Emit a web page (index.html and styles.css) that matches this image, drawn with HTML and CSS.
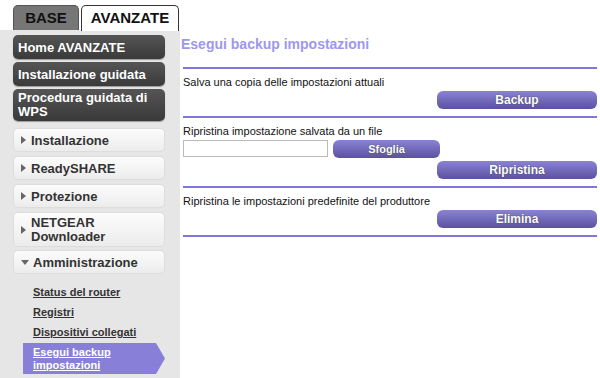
FILE: index.html
```html
<!DOCTYPE html>
<html lang="it">
<head>
    <meta charset="UTF-8">
    <title>Esegui backup impostazioni</title>
    <link rel="stylesheet" href="styles.css">
</head>
<body>
    <div class="tabs">
        <div class="tab">BASE</div>
        <div class="tab active">AVANZATE</div>
    </div>

    <div class="main">
        <div class="sidebar">
            <div class="nav dark">Home AVANZATE</div>
            <div class="nav dark">Installazione guidata</div>
            <div class="nav dark tall">Procedura guidata di<br>WPS</div>

            <div class="nav light first"><span class="arrow"></span><span>Installazione</span></div>
            <div class="nav light"><span class="arrow"></span><span>ReadySHARE</span></div>
            <div class="nav light"><span class="arrow"></span><span>Protezione</span></div>
            <div class="nav light tall2"><span class="arrow"></span><span>NETGEAR<br>Downloader</span></div>
            <div class="nav light"><span class="arrow down"></span><span>Amministrazione</span></div>

            <ul class="sub">
                <li><a href="#">Status del router</a></li>
                <li><a href="#">Registri</a></li>
                <li><a href="#">Dispositivi collegati</a></li>
                <li class="selected"><a href="#">Esegui backup<br>impostazioni</a></li>
            </ul>
        </div>

        <div class="content">
            <h1 class="title">Esegui backup impostazioni</h1>

            <div class="section">
                <p class="label">Salva una copia delle impostazioni attuali</p>
                <div class="row-right"><button class="btn">Backup</button></div>
            </div>

            <div class="section">
                <p class="label">Ripristina impostazione salvata da un file</p>
                <div class="file-row">
                    <input type="text" class="file-input">
                    <button class="btn small">Sfoglia</button>
                </div>
                <div class="row-right"><button class="btn">Ripristina</button></div>
            </div>

            <div class="section">
                <p class="label">Ripristina le impostazioni predefinite del produttore</p>
                <div class="row-right"><button class="btn">Elimina</button></div>
            </div>
        </div>
    </div>
</body>
</html>
```

FILE: styles.css
```css
* {
    margin: 0;
    padding: 0;
    box-sizing: border-box;
}

body {
    width: 600px;
    height: 378px;
    overflow: hidden;
    background-color: #fff;
    font-family: "Liberation Sans", Arial, sans-serif;
}

.tabs {
    display: flex;
    gap: 2px;
    padding: 5px 0 0 13px;
    height: 30px;
}

.tab {
    width: 66px;
    height: 25px;
    background-color: #767676;
    border: 1px solid #555;
    border-bottom: 0;
    border-radius: 5px 5px 0 0;
    font-size: 15px;
    font-weight: bold;
    color: #111;
    text-align: center;
    line-height: 24px;
}

.tab.active {
    width: 98px;
    height: 26px;
    background-color: #fff;
    border-color: #333;
    position: relative;
    z-index: 1;
}

.main {
    display: flex;
    height: 348px;
}

.sidebar {
    width: 180px;
    background-color: #e6e6e6;
    padding: 5px 0 0 13px;
}

.nav {
    width: 152px;
    height: 24px;
    border-radius: 5px;
    margin-bottom: 3px;
    font-size: 13px;
    font-weight: bold;
    display: flex;
    align-items: center;
}

.nav.dark {
    background: linear-gradient(#555, #3a3a3a);
    color: #fff;
    padding-left: 5px;
    box-shadow: 0 1px 1px #999;
}

.nav.dark.tall {
    height: 32px;
    line-height: 14px;
}

.nav.light {
    background: linear-gradient(#fcfcfc, #ececec);
    border: 1px solid #ddd;
    color: #333;
    padding-left: 7px;
    margin-bottom: 4px;
}

.nav.light.first {
    margin-top: 7px;
}

.nav.light.tall2 {
    height: 35px;
    line-height: 14px;
    margin-bottom: 3px;
}

.arrow {
    width: 0;
    height: 0;
    border-top: 4px solid transparent;
    border-bottom: 4px solid transparent;
    border-left: 5px solid #666;
    margin-right: 5px;
}

.arrow.down {
    border-left: 4px solid transparent;
    border-right: 4px solid transparent;
    border-top: 5px solid #666;
    border-bottom: 0;
    margin-right: 4px;
}

.sub {
    list-style: none;
    margin-top: 12px;
}

.sub li {
    font-size: 11px;
    font-weight: bold;
    padding-left: 20px;
    margin-bottom: 7px;
    line-height: 13px;
}

.sub a {
    color: #333;
}

.sub li.selected {
    margin-left: 10px;
    padding-left: 10px;
    width: 142px;
    height: 31px;
    padding-top: 3px;
    background-color: #8880d8;
    clip-path: polygon(0 0, 133px 0, 142px 50%, 133px 100%, 0 100%);
    margin-top: -3px;
}

.sub li.selected a {
    color: #fff;
}

.content {
    flex: 1;
    padding: 6px 3px 0 1px;
}

.title {
    font-size: 14px;
    font-weight: bold;
    color: #9c98ee;
    height: 31px;
}

.section {
    border-top: 2px solid #7f78da;
    margin-left: 2px;
    padding: 6px 0 7px 0;
}

.section:last-child {
    border-bottom: 2px solid #7f78da;
}

.label {
    font-size: 11px;
    color: #111;
    line-height: 14px;
    margin-bottom: 2px;
}

.row-right {
    display: flex;
    justify-content: flex-end;
}

.btn {
    width: 160px;
    height: 18px;
    border: 0;
    border-radius: 6px;
    background: linear-gradient(#8a83d4, #5b519f);
    color: #fff;
    font-family: "Liberation Sans", Arial, sans-serif;
    font-size: 12px;
    font-weight: bold;
    text-shadow: 0 0 1px #333;
}

.btn.small {
    width: 107px;
    font-size: 11px;
}

.file-row {
    display: flex;
    gap: 5px;
    margin-bottom: 3px;
}

.file-input {
    width: 145px;
    height: 17px;
    border: 1px solid #bbb;
}
```
